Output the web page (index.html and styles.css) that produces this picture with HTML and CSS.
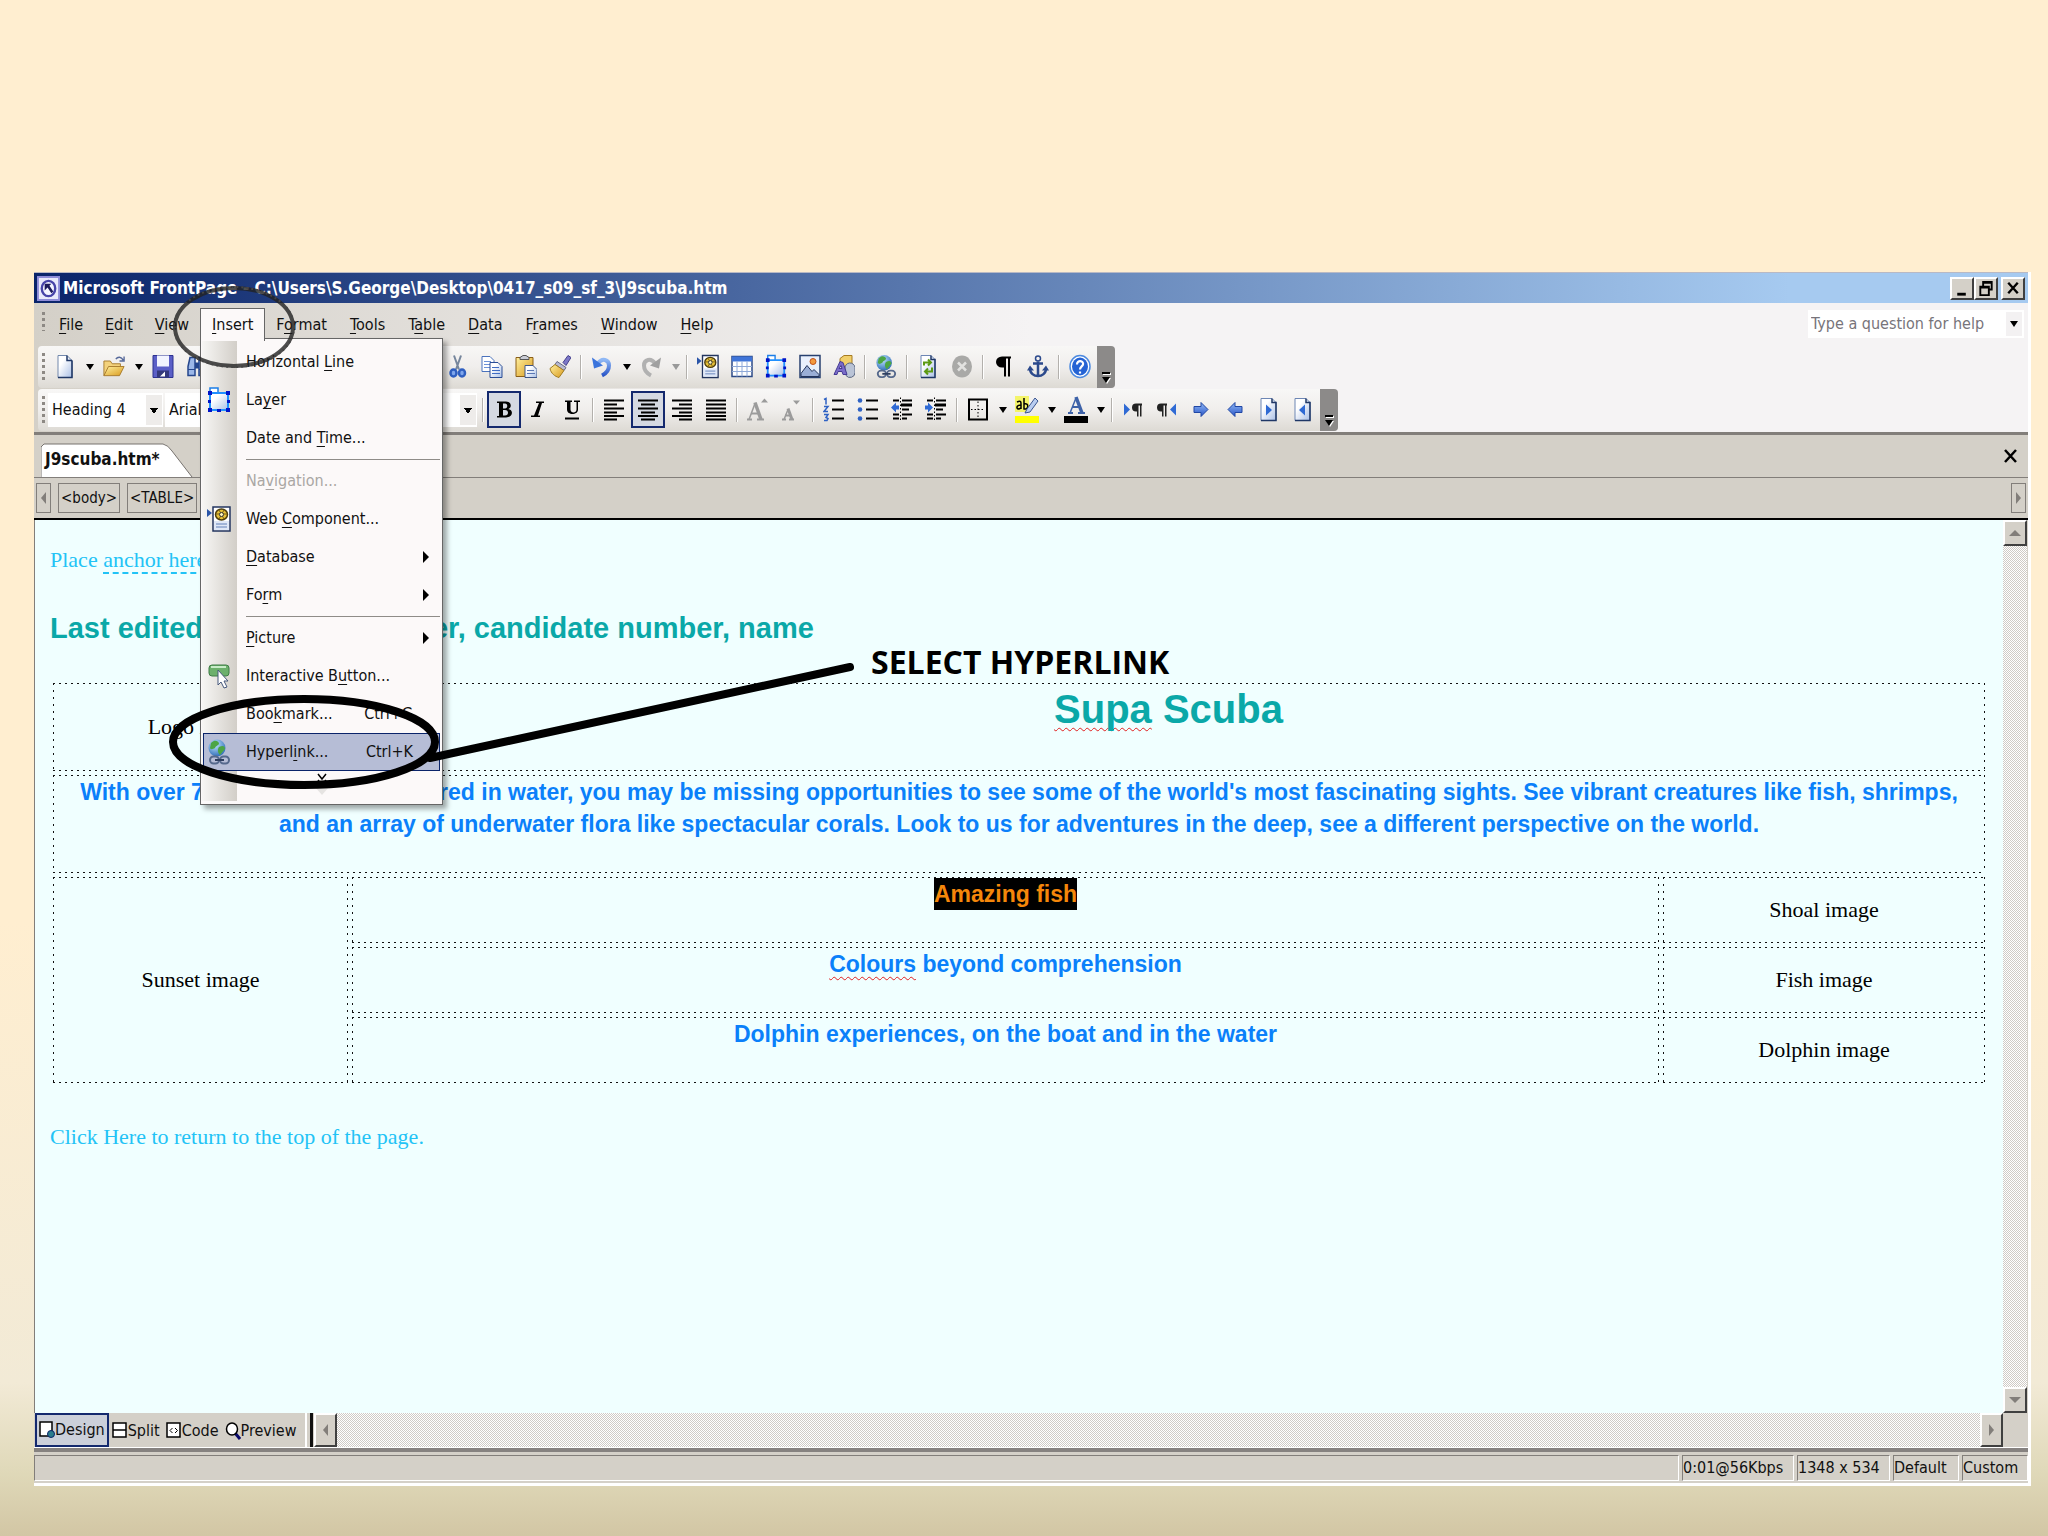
FILE: index.html
```
<!DOCTYPE html>
<html lang="en">
  <head>
    <meta charset="UTF-8" />
    <title>Microsoft FrontPage</title>
    <link rel="stylesheet" href="styles.css">
  </head>
  <body>
    <!-- icon set -->
    <svg class="defs" aria-hidden="true">
      <defs>
        <linearGradient id="g-blue" x1="0" y1="0" x2="0" y2="1"><stop offset="0" stop-color="#8fb8f5" /><stop offset="1" stop-color="#2a56c8" /></linearGradient>
        <linearGradient id="g-page" x1="0" y1="0" x2="1" y2="1"><stop offset="0.3" stop-color="#fff" /><stop offset="1" stop-color="#a9bfe6" /></linearGradient>
        <linearGradient id="g-gold" x1="0" y1="0" x2="1" y2="1"><stop offset="0" stop-color="#fff0a0" /><stop offset="1" stop-color="#d99a1c" /></linearGradient>
        <radialGradient id="g-globe" cx="0.4" cy="0.3" r="0.8"><stop offset="0" stop-color="#bfe6ff" /><stop offset="1" stop-color="#1f5fb0" /></radialGradient>
      </defs>
      <symbol id="i-new" viewBox="0 0 22 24"><path d="M4 1h9l5 5v17H4z" fill="url(#g-page)" stroke="#7288ac" /><path d="M13 1v5h5M18 6v17H4" fill="none" stroke="#1f3766" stroke-width="1.5" /></symbol>
      <symbol id="i-open" viewBox="0 0 24 24"><path d="M1 22V6h7l2 3h9v4" fill="#f3d27c" stroke="#a5782b" /><path d="M1 22l5-10h17l-5 10z" fill="url(#g-gold)" stroke="#a5782b" /><path d="M14 4c2-3 6-3 8 1m1-4v5h-5" fill="none" stroke="#56699a" stroke-width="1.5" /></symbol>
      <symbol id="i-save" viewBox="0 0 22 24"><path d="M1 1h20v22H1z" fill="#5b5fc7" stroke="#2d3290" /><path d="M5 1h12v11H5z" fill="#f2f4ff" /><path d="M5 16h12v7H5z" fill="#34387c" /><path d="M8 22l5-5v5z" fill="#fff" /></symbol>
      <symbol id="i-find" viewBox="0 0 22 24"><path d="M2 12l2-9h5v18H2zM20 12l-2-9h-5v18h7z" fill="#9bb7e8" stroke="#25468c" stroke-width="1.5" /><path d="M9 8h4v6H9z" fill="#25468c" /><path d="M2 15h7M13 15h7" stroke="#25468c" /></symbol>
      <symbol id="i-cut" viewBox="0 0 22 24"><path d="M7 1l5 14M14 1L9 15" stroke="#76869c" stroke-width="2" fill="none" /><ellipse cx="6.500" cy="18.500" rx="3" ry="3.500" fill="#7fa6ec" stroke="#2f5fc0" stroke-width="2.5" /><ellipse cx="15" cy="18.500" rx="3" ry="3.500" fill="#7fa6ec" stroke="#2f5fc0" stroke-width="2.5" /></symbol>
      <symbol id="i-copy" viewBox="0 0 22 24"><path d="M1 2h8l4 4v11H1z" fill="#fff" stroke="#4a72bc" /><path d="M3 7h7M3 10h7M3 13h7" stroke="#6d92d8" /><path d="M9 8h8l4 4v11H9z" fill="url(#g-page)" stroke="#2a4d96" /><path d="M11 13h7M11 16h8M11 19h8" stroke="#3f6cc4" /></symbol>
      <symbol id="i-paste" viewBox="0 0 22 24"><path d="M1 3h17v19H1z" fill="url(#g-gold)" stroke="#8b5f17" /><path d="M5 5V3l3-2h3l3 2v2z" fill="#c9ccd6" stroke="#555" /><path d="M10 11h8l4 4v8H10z" fill="url(#g-page)" stroke="#3c5489" /><path d="M12 16h7M12 19h8" stroke="#5a77b4" /></symbol>
      <symbol id="i-brush" viewBox="0 0 22 24"><path d="M14 8l5-7 3 2-5 8z" fill="#7d78c8" stroke="#45408c" /><path d="M8 7l9 6-2 3-9-6z" fill="#b8bad0" stroke="#666a8c" /><path d="M6 10l9 6-5 7c-4-1-8-4-9-9z" fill="url(#g-gold)" stroke="#a07c23" /></symbol>
      <symbol id="i-undo" viewBox="0 0 22 24"><path d="M7 9c4-6 11-4 11 2 0 4-3 8-7 10" fill="none" stroke="url(#g-blue)" stroke-width="4" /><path d="M1 3l2 11 9-3z" fill="#3b74dc" /></symbol>
      <symbol id="i-redo" viewBox="0 0 22 24"><path d="M15 9C11 3 4 5 4 11c0 4 3 8 7 10" fill="none" stroke="#b1b1b1" stroke-width="4" /><path d="M21 3l-2 11-9-3z" fill="#a0a0a0" /></symbol>
      <symbol id="i-web" viewBox="0 0 24 26"><path d="M0 3l5 4-5 4z" fill="#2a55a8" /><path d="M6 1h17v24H6z" fill="#fff" stroke="#23355f" stroke-width="1.5" /><path d="M7 15h15v9H7z" fill="#dfe7f7" /><path d="M9 18h11M9 21h11" stroke="#6380b8" /><ellipse cx="14.500" cy="8.500" rx="6" ry="5.500" fill="#e6c13a" stroke="#4d3d0b" stroke-width="1.500" /><path d="M9 8h11M12 4l5 9M17 4l-5 9" stroke="#7a5f10" /><circle cx="14.500" cy="8.500" r="2" fill="#fff5b8" stroke="#333" /></symbol>
      <symbol id="i-table" viewBox="0 0 22 24"><path d="M1 2h20v20H1z" fill="#fff" stroke="#2c4a86" stroke-width="1.5" /><path d="M1 2h20v5H1z" fill="#3f74d8" /><path d="M6 7v15M11 7v15M16 7v15M1 12h20M1 17h20" stroke="#8fa9d8" /></symbol>
      <symbol id="i-layer" viewBox="0 0 24 26"><path d="M3 6V1h8v5" fill="#fff" stroke="#1b7ee8" stroke-width="1.5" /><path d="M3 6h18v17H3z" fill="url(#g-page)" stroke="#2090ff" stroke-width="2" /><path d="M1 4h4v4H1zM19 4h4v4h-4zM1 21h4v4H1zM19 21h4v4h-4zM1 13h3v3H1zM20 13h3v3h-3zM10 22h4v3h-4z" fill="#0014c8" /></symbol>
      <symbol id="i-picture" viewBox="0 0 22 24"><path d="M1 1h20v22H1z" fill="#e9f0fc" stroke="#28406f" stroke-width="1.5" /><circle cx="14" cy="7" r="3" fill="#f39a3e" stroke="#c2541c" /><path d="M2 19l6-8 5 6 2-2 5 5v2H2z" fill="#9aaed6" stroke="#24355c" /></symbol>
      <symbol id="i-shapes" viewBox="0 0 22 24"><path d="M7 4l4-3h8v8l-3 3H7z" fill="#f1cf6a" stroke="#a67b22" /><path d="M12 14a5 5 0 0 1 10-1v5a5 5 0 0 1-9 3z" fill="#b9c3d6" stroke="#5b6780" /><path d="M1 20L7 7l3 1 4 12h-4l-1-3H5l-1 3zM6 14h3L8 11z" fill="#7a6cc9" stroke="#453a94" fill-rule="evenodd" /></symbol>
      <symbol id="i-link" viewBox="0 0 24 26"><circle cx="10" cy="9" r="8.500" fill="url(#g-globe)" /><path d="M4 4c4-4 7-2 8 0 0 3-3 2-4 5-2 1-4 2-5 0zM12 8c4-2 6-1 6 2l-5 6c-2-2-3-5-1-8z" fill="#4ca545" /><rect x="3" y="17.500" width="9" height="7" rx="3.500" fill="none" stroke="#56698c" stroke-width="2" /><rect x="13" y="17.500" width="9" height="7" rx="3.500" fill="none" stroke="#56698c" stroke-width="2" /><path d="M8 21h9" stroke="#2f3f60" stroke-width="2" /></symbol>
      <symbol id="i-refresh" viewBox="0 0 22 24"><path d="M4 1h10l4 4v18H4z" fill="url(#g-page)" stroke="#6d86b4" /><path d="M14 1v4h4v18H4" fill="none" stroke="#1f3766" stroke-width="1.500" /><path d="M7 11V8h6M11 5l3 3-3 3M15 13v4H9M11 14l-3 3 3 3" fill="none" stroke="#5c9a14" stroke-width="2" /></symbol>
      <symbol id="i-stop" viewBox="0 0 22 24"><ellipse cx="11" cy="12" rx="10" ry="11" fill="#a9a9a7" /><path d="M7 8l8 8M15 8l-8 8" stroke="#e2e2e0" stroke-width="2.500" /></symbol>
      <symbol id="i-para" viewBox="0 0 22 24"><path d="M18 2H9a6 5.500 0 0 0 0 11h2v9h2V4h2v18h2V4h1z" fill="#000" /></symbol>
      <symbol id="i-anchor" viewBox="0 0 22 24"><circle cx="11" cy="4" r="2.500" fill="none" stroke="#2c4a8c" stroke-width="1.500" /><path d="M11 7v14M6 9h10M3 14c0 10 16 10 16 0" fill="none" stroke="#2c4a8c" stroke-width="2.500" /><path d="M0 16l3-5 4 5zM22 16l-3-5-4 5z" fill="#2c4a8c" /></symbol>
      <symbol id="i-help" viewBox="0 0 22 24"><ellipse cx="11" cy="12" rx="10" ry="11" fill="#fff" stroke="#4d8ae0" stroke-width="1.500" /><ellipse cx="11" cy="12" rx="8" ry="9" fill="#2563d4" /><path d="M8 10c0-5 7-4 6 0-.5 2-3 2-3 5M11 17v2" fill="none" stroke="#fff" stroke-width="2.200" /></symbol>
      <symbol id="i-bold" viewBox="0 0 22 24"><path d="M4 4h9c6 0 6 7 2 7.500 6 .5 5 8.500-2 8.500H4v-1.500h2v-13H4zM10 6v5h2c3 0 3-5 0-5zm0 6.500V18h2c4 0 4-5.500 0-5.500z" fill="#000" fill-rule="evenodd" /></symbol>
      <symbol id="i-italic" viewBox="0 0 22 24"><path d="M9 4h8v1.500h-2L11 18h2v1.500H4V18h3l5-12.500H9z" fill="#000" /></symbol>
      <symbol id="i-under" viewBox="0 0 22 24"><path d="M4 3h7v1.500H9.500V12c0 4 6 4 6 0V4.500H13V3h6v1.500h-2V12c0 6-11 6-11 0V4.500H4zM4 20h14v2H4z" fill="#000" /></symbol>
      <symbol id="i-left" viewBox="0 0 22 24"><path d="M1 3h20M1 7h13M1 11h20M1 15h13M1 18.500h20M1 22h13" stroke="#000" stroke-width="2" /></symbol>
      <symbol id="i-center" viewBox="0 0 22 24"><path d="M1 3h20M4 7h14M1 11h20M4 15h14M1 18.500h20M4 22h14" stroke="#000" stroke-width="2" /></symbol>
      <symbol id="i-right" viewBox="0 0 22 24"><path d="M1 3h20M8 7h13M1 11h20M8 15h13M1 18.500h20M8 22h13" stroke="#000" stroke-width="2" /></symbol>
      <symbol id="i-just" viewBox="0 0 22 24"><path d="M1 3h20M1 7h20M1 11h20M1 15h20M1 18.500h20M1 22h20" stroke="#000" stroke-width="2" /></symbol>
      <symbol id="i-grow" viewBox="0 0 22 24"><path d="M2 22L8 6" fill="none" stroke="#9b9b9b" stroke-width="1.500" /><path d="M8 5l6 17" fill="none" stroke="#9b9b9b" stroke-width="3.500" /><path d="M4 16h8M0 22h5M10 22h7" fill="none" stroke="#9b9b9b" stroke-width="2" /><path d="M14 5l3.500-4L21 5z" fill="#9b9b9b" /></symbol>
      <symbol id="i-shrink" viewBox="0 0 22 24"><path d="M3 22L7 12" fill="none" stroke="#9b9b9b" stroke-width="1.500" /><path d="M7 11l4 11" fill="none" stroke="#9b9b9b" stroke-width="3" /><path d="M4 18h6M1 22h4M8 22h5" fill="none" stroke="#9b9b9b" stroke-width="2" /><path d="M12 3l3.500 4L19 3z" fill="#9b9b9b" /></symbol>
      <symbol id="i-num" viewBox="0 0 22 24"><path d="M9 3h12M9 12h12M9 21h12" stroke="#000" stroke-width="2" /><path d="M1 2l2-1v6M1 9h4L1 14h4M1 17h4l-2 3 2 1-1 2H1" fill="none" stroke="#2f62c4" stroke-width="1.500" /></symbol>
      <symbol id="i-bul" viewBox="0 0 22 24"><path d="M9 3h12M9 12h12M9 21h12" stroke="#000" stroke-width="2" /><circle cx="3" cy="3" r="2.300" fill="#2f62c4" /><circle cx="3" cy="12" r="2.300" fill="#2f62c4" /><circle cx="3" cy="21" r="2.300" fill="#2f62c4" /></symbol>
      <symbol id="i-outd" viewBox="0 0 22 24"><path d="M2 3h6M11 3h10M11 12h7M2 17h6M11 17h10M2 21h6M11 21h5" stroke="#000" stroke-width="2" /><path d="M10 7.500h11" stroke="#000" stroke-width="3" /><path d="M9.500 0v24" stroke="#000" stroke-dasharray="1.500 2" /><path d="M0 10l5-5v3h3v4H5v3z" fill="#2f6ad4" /></symbol>
      <symbol id="i-ind" viewBox="0 0 22 24"><path d="M2 3h6M11 3h10M11 12h7M2 17h6M11 17h10M2 21h6M11 21h5" stroke="#000" stroke-width="2" /><path d="M10 7.500h11" stroke="#000" stroke-width="3" /><path d="M9.500 0v24" stroke="#000" stroke-dasharray="1.500 2" /><path d="M8 10L3 5v3H0v4h3v3z" fill="#2f6ad4" /></symbol>
      <symbol id="i-border" viewBox="0 0 22 24"><path d="M2 2h18v20H2z" fill="none" stroke="#000" stroke-width="2" /><path d="M11 4v16M4 12h14" stroke="#000" stroke-dasharray="1.500 2" /></symbol>
      <symbol id="i-mark" viewBox="0 0 24 28"><path d="M0 0h14v16H0z" fill="#f4f46a" /><path d="M2 6c4-2 4 0 4 2v5M6 9c-5 0-5 4-2 4l2-1M9 2v11c5 1 5-7 0-5" fill="none" stroke="#000" stroke-width="1.500" /><path d="M12 13L20 2l3 3-8 11-5 1z" fill="#b9cdf0" stroke="#3a5590" /><path d="M0 20h24v7H0z" fill="#ff0" /></symbol>
      <symbol id="i-color" viewBox="0 0 24 28"><path d="M6 17l6-15" fill="none" stroke="#3d62a8" stroke-width="1.500" /><path d="M12 1l6 16" fill="none" stroke="#3d62a8" stroke-width="3.500" /><path d="M8 11h8M4 17h5M14 17h7" fill="none" stroke="#3d62a8" stroke-width="2" /><path d="M0 20h24v7H0z" fill="#000" /></symbol>
      <symbol id="i-ltr" viewBox="0 0 22 24"><path d="M2 6l6 6-6 6z" fill="#2f6ad4" /><path d="M20 6h-6a4 4 0 0 0 0 8h1v5h1.500V8H18v11h1.500V8h.5z" fill="#222" /></symbol>
      <symbol id="i-rtl" viewBox="0 0 22 24"><path d="M20 6l-6 6 6 6z" fill="#2f6ad4" /><path d="M11 6H5a4 4 0 0 0 0 8h1v5h1.500V8H9v11h1.500V8h.5z" fill="#222" /></symbol>
      <symbol id="i-next" viewBox="0 0 22 24"><path d="M4 9h7V5l7 7-7 7v-4H4z" fill="url(#g-blue)" stroke="#2147a4" /></symbol>
      <symbol id="i-prev" viewBox="0 0 22 24"><path d="M18 9h-7V5l-7 7 7 7v-4h7z" fill="url(#g-blue)" stroke="#2147a4" /></symbol>
      <symbol id="i-pnext" viewBox="0 0 22 24"><path d="M3 1h11l4 4v18H3z" fill="url(#g-page)" stroke="#6d86b4" /><path d="M14 1v4h4v18H3" fill="none" stroke="#1f3766" stroke-width="1.500" /><path d="M8 7l6 5.500L8 18z" fill="#2f6ad4" /></symbol>
      <symbol id="i-pprev" viewBox="0 0 22 24"><path d="M3 1h11l4 4v18H3z" fill="url(#g-page)" stroke="#6d86b4" /><path d="M14 1v4h4v18H3" fill="none" stroke="#1f3766" stroke-width="1.500" /><path d="M13 7l-6 5.500 6 5.500z" fill="#2f6ad4" /></symbol>
      <symbol id="i-button" viewBox="0 0 24 26"><rect x="2" y="2" width="20" height="11" rx="3" fill="#6cb06c" stroke="#3f7d46" /><path d="M4 4h15" stroke="#c8ecc8" stroke-width="2" /><path d="M11 7v15l3-3 3 6 3-1-3-6h4z" fill="#fff" stroke="#46587c" /></symbol>
    </svg>

    <div class="window">
      <header class="titlebar">
        <svg class="app-icon" viewBox="0 0 24 26"><path d="M1 1h22v24H1z" fill="#e9e9fb" stroke="#8e8cd8" stroke-width="2" /><ellipse cx="12" cy="13" rx="7" ry="8" fill="#f4f4ff" stroke="#4743a8" stroke-width="2.500" /><path d="M8 8h7l-2 2 4 6-2 2-4-6-3 3z" fill="#1d1a5c" /></svg>
        <span class="title">Microsoft FrontPage - C:\Users\S.George\Desktop\0417_s09_sf_3\J9scuba.htm</span>
        <button class="win-btn" aria-label="Minimize"><svg viewBox="0 0 20 20"><path d="M5 16h9" stroke="#000" stroke-width="3" /></svg></button>
        <button class="win-btn" aria-label="Restore"><svg viewBox="0 0 20 20"><path d="M7 7V3h9v8h-3M7 4h9M4 8h9v9H4zM4 9h9" fill="none" stroke="#000" stroke-width="2" /></svg></button>
        <button class="win-btn win-close" aria-label="Close"><svg viewBox="0 0 20 20"><path d="M5 4l10 11M15 4L5 15" stroke="#000" stroke-width="2.500" /></svg></button>
      </header>

      <div class="chrome">
        <nav class="menubar">
          <span class="grip"></span>
          <button><u>F</u>ile</button>
          <button><u>E</u>dit</button>
          <button><u>V</u>iew</button>
          <div class="menu-wrap">
            <button class="open"><u>I</u>nsert</button>
            <div class="menu">
              <button><span>Horizontal <u>L</u>ine</span></button>
              <button><svg class="mi"><use href="#i-layer" /></svg><span>La<u>y</u>er</span></button>
              <button><span>Date and <u>T</u>ime...</span></button>
              <hr>
              <button disabled><span>Na<u>v</u>igation...</span></button>
              <button><svg class="mi"><use href="#i-web" /></svg><span>Web <u>C</u>omponent...</span></button>
              <button class="sub"><span><u>D</u>atabase</span></button>
              <button class="sub"><span>Fo<u>r</u>m</span></button>
              <hr>
              <button class="sub"><span><u>P</u>icture</span></button>
              <button><svg class="mi"><use href="#i-button" /></svg><span>Interactive B<u>u</u>tton...</span></button>
              <button><span>Boo<u>k</u>mark...</span><kbd>Ctrl+G</kbd></button>
              <button class="selected"><svg class="mi"><use href="#i-link" /></svg><span>Hyperl<u>i</u>nk...</span><kbd>Ctrl+K</kbd></button>
              <div class="more"><svg viewBox="0 0 20 24"><path d="M10 24L3 16h14z" fill="#e6e4e2" /><path d="M6 3l4 5 4-5M6 9l4 5 4-5" fill="none" stroke="#000" stroke-width="1.500" /></svg></div>
            </div>
          </div>
          <button>F<u>o</u>rmat</button>
          <button><u>T</u>ools</button>
          <button>T<u>a</u>ble</button>
          <button><u>D</u>ata</button>
          <button>F<u>r</u>ames</button>
          <button><u>W</u>indow</button>
          <button><u>H</u>elp</button>
          <div class="ask">
            <input type="text" placeholder="Type a question for help" aria-label="Type a question for help">
            <button aria-label="Recent questions"><i class="arr"></i></button>
          </div>
        </nav>

        <div class="toolbar">
          <span class="grip"></span>
          <button class="tb" aria-label="New"><svg><use href="#i-new" /></svg></button><button class="drop" aria-label="New options"><i class="arr"></i></button>
          <button class="tb" aria-label="Open"><svg><use href="#i-open" /></svg></button><button class="drop" aria-label="Open options"><i class="arr"></i></button>
          <button class="tb" aria-label="Save"><svg><use href="#i-save" /></svg></button>
          <button class="tb" aria-label="Find"><svg><use href="#i-find" /></svg></button>
          <span class="spacer"></span>
          <button class="tb" aria-label="Cut"><svg><use href="#i-cut" /></svg></button>
          <button class="tb" aria-label="Copy"><svg><use href="#i-copy" /></svg></button>
          <button class="tb" aria-label="Paste"><svg><use href="#i-paste" /></svg></button>
          <button class="tb" aria-label="Format painter"><svg><use href="#i-brush" /></svg></button>
          <span class="sep"></span>
          <button class="tb" aria-label="Undo"><svg><use href="#i-undo" /></svg></button><button class="drop" aria-label="Undo list"><i class="arr"></i></button>
          <button class="tb" aria-label="Redo"><svg><use href="#i-redo" /></svg></button><button class="drop" aria-label="Redo list"><i class="arr off"></i></button>
          <span class="sep"></span>
          <button class="tb" aria-label="Web component"><svg><use href="#i-web" /></svg></button>
          <button class="tb" aria-label="Insert table"><svg><use href="#i-table" /></svg></button>
          <button class="tb" aria-label="Insert layer"><svg><use href="#i-layer" /></svg></button>
          <button class="tb" aria-label="Insert picture"><svg><use href="#i-picture" /></svg></button>
          <button class="tb" aria-label="Drawing"><svg><use href="#i-shapes" /></svg></button>
          <span class="sep"></span>
          <button class="tb" aria-label="Insert hyperlink"><svg><use href="#i-link" /></svg></button>
          <span class="sep"></span>
          <button class="tb" aria-label="Refresh"><svg><use href="#i-refresh" /></svg></button>
          <button class="tb" aria-label="Stop"><svg><use href="#i-stop" /></svg></button>
          <span class="sep"></span>
          <button class="tb" aria-label="Show all"><svg><use href="#i-para" /></svg></button>
          <button class="tb" aria-label="Show layer anchors"><svg><use href="#i-anchor" /></svg></button>
          <span class="sep"></span>
          <button class="tb" aria-label="Help"><svg><use href="#i-help" /></svg></button>
          <button class="tb-end" aria-label="Toolbar options"><i class="arr"></i></button>
        </div>

        <div class="toolbar">
          <span class="grip"></span>
          <span class="combo style"><select aria-label="Style"><option>Heading 4</option></select></span>
          <span class="combo font"><select aria-label="Font"><option>Arial</option></select></span>
          <span class="combo size"><select aria-label="Font size"><option></option></select></span>
          <span class="sep"></span>
          <button class="tb on" aria-label="Bold"><svg><use href="#i-bold" /></svg></button>
          <button class="tb" aria-label="Italic"><svg><use href="#i-italic" /></svg></button>
          <button class="tb" aria-label="Underline"><svg><use href="#i-under" /></svg></button>
          <span class="sep"></span>
          <button class="tb" aria-label="Align left"><svg><use href="#i-left" /></svg></button>
          <button class="tb on" aria-label="Center"><svg><use href="#i-center" /></svg></button>
          <button class="tb" aria-label="Align right"><svg><use href="#i-right" /></svg></button>
          <button class="tb" aria-label="Justify"><svg><use href="#i-just" /></svg></button>
          <span class="sep"></span>
          <button class="tb" aria-label="Increase font size"><svg><use href="#i-grow" /></svg></button>
          <button class="tb" aria-label="Decrease font size"><svg><use href="#i-shrink" /></svg></button>
          <span class="sep"></span>
          <button class="tb" aria-label="Numbering"><svg><use href="#i-num" /></svg></button>
          <button class="tb" aria-label="Bullets"><svg><use href="#i-bul" /></svg></button>
          <button class="tb" aria-label="Decrease indent"><svg><use href="#i-outd" /></svg></button>
          <button class="tb" aria-label="Increase indent"><svg><use href="#i-ind" /></svg></button>
          <span class="sep"></span>
          <button class="tb" aria-label="Borders"><svg><use href="#i-border" /></svg></button><button class="drop" aria-label="Border options"><i class="arr"></i></button>
          <button class="tb" aria-label="Highlight"><svg class="tall"><use href="#i-mark" /></svg></button><button class="drop" aria-label="Highlight colours"><i class="arr"></i></button>
          <button class="tb" aria-label="Font color"><svg class="tall"><use href="#i-color" /></svg></button><button class="drop" aria-label="Font colours"><i class="arr"></i></button>
          <span class="sep"></span>
          <button class="tb" aria-label="Left to right"><svg><use href="#i-ltr" /></svg></button>
          <button class="tb" aria-label="Right to left"><svg><use href="#i-rtl" /></svg></button>
          <button class="tb" aria-label="Next"><svg><use href="#i-next" /></svg></button>
          <button class="tb" aria-label="Previous"><svg><use href="#i-prev" /></svg></button>
          <button class="tb" aria-label="Next page"><svg><use href="#i-pnext" /></svg></button>
          <button class="tb" aria-label="Previous page"><svg><use href="#i-pprev" /></svg></button>
          <button class="tb-end" aria-label="Toolbar options"><i class="arr"></i></button>
        </div>
      </div>

      <div class="tabs">
        <button class="tab"><svg viewBox="0 0 152 34" preserveAspectRatio="none"><path d="M0 34V4l3-3h119q5 1 9 7l20 26" fill="#fff" stroke="#77736f" /></svg><span>J9scuba.htm*</span></button>
        <button class="tab-close" aria-label="Close page"><svg viewBox="0 0 14 14"><path d="M1 1l11 12M12 1L1 13" stroke="#000" stroke-width="2.500" /></svg></button>
      </div>
      <div class="tags">
        <button class="nudge" aria-label="Scroll tags left"><i class="tri-l"></i></button>
        <button class="tag">&lt;body&gt;</button>
        <button class="tag">&lt;TABLE&gt;</button>
        <button class="nudge last" aria-label="Scroll tags right"><i class="tri-r"></i></button>
      </div>

      <div class="work">
        <main class="doc">
          <p>Place <span class="mark">anchor here</span></p>
          <h3>Last edited by Centre number, candidate number, name</h3>
          <table>
            <colgroup><col class="c1"><col><col class="c3"></colgroup>
            <tr class="r1">
              <td>Logo image</td>
              <td class="top" colspan="2"><h1><span class="typo">Supa</span> Scuba</h1></td>
            </tr>
            <tr class="r2">
              <td class="top" colspan="3"><h4>With over 70% of the planet covered in water, you may be missing opportunities to see some of the world's most fascinating sights. See vibrant creatures like fish, shrimps, and an array of underwater flora like spectacular corals. Look to us for adventures in the deep, see a different perspective on the world.</h4></td>
            </tr>
            <tr class="r3">
              <td rowspan="3">Sunset image</td>
              <td class="top"><h4><span class="picked">Amazing fish</span></h4></td>
              <td>Shoal image</td>
            </tr>
            <tr class="r3">
              <td class="top"><h4><span class="typo">Colours</span> beyond comprehension</h4></td>
              <td>Fish image</td>
            </tr>
            <tr class="r3">
              <td class="top"><h4>Dolphin experiences, on the boat and in the water</h4></td>
              <td>Dolphin image</td>
            </tr>
          </table>
          <p>Click Here to return to the top of the page.</p>
        </main>
        <div class="vscroll">
          <button aria-label="Scroll up"><i class="tri-u"></i></button>
          <button aria-label="Scroll down"><i class="tri-d"></i></button>
        </div>
      </div>

      <div class="views">
        <button class="view on"><svg viewBox="0 0 16 18"><path d="M1 1h12v14H1z" fill="#fff" stroke="#000" stroke-width="1.500" /><circle cx="12" cy="13" r="3.500" fill="#2c7c8c" stroke="#0a246a" /></svg>Design</button>
        <button class="view"><svg viewBox="0 0 16 18"><path d="M1 1h13v14H1zM1 8h13" fill="#fff" stroke="#000" stroke-width="1.500" /></svg>Split</button>
        <button class="view"><svg viewBox="0 0 16 18"><path d="M1 1h13v14H1z" fill="#fff" stroke="#000" stroke-width="1.500" /><path d="M6.500 6L4 8.500 6.500 11M9 6l2.500 2.500L9 11" fill="none" stroke="#000" /></svg>Code</button>
        <button class="view"><svg viewBox="0 0 16 18"><path d="M10 11l5 6" stroke="#0a0a6a" stroke-width="3" /><ellipse cx="7" cy="7" rx="5.500" ry="6" fill="#fff" stroke="#000" stroke-width="1.500" /></svg>Preview</button>
        <span class="split"></span>
        <div class="hscroll">
          <button aria-label="Scroll left"><i class="tri-l"></i></button>
          <button aria-label="Scroll right"><i class="tri-r"></i></button>
        </div>
      </div>

      <footer class="status">
        <span class="pane wide"></span>
        <span class="pane speed">0:01@56Kbps</span>
        <span class="pane dims">1348 x 534</span>
        <span class="pane mode">Default</span>
        <span class="pane mode">Custom</span>
      </footer>

      <!-- hand drawn notes, origin at the window's corner -->
      <svg class="notes" viewBox="0 0 1200 600" aria-hidden="true">
        <ellipse cx="200" cy="55" rx="59" ry="39" fill="none" stroke="#222" stroke-opacity="0.8" stroke-width="4" />
        <ellipse cx="200" cy="55" rx="60" ry="40" fill="none" stroke="#444" stroke-width="2" stroke-dasharray="2 3" />
        <ellipse cx="270" cy="470" rx="131" ry="43" fill="none" stroke="#000" stroke-width="8" />
        <path d="M396 486L816 395" stroke="#000" stroke-width="8" stroke-linecap="round" />
      </svg>
      <div class="callout">SELECT HYPERLINK</div>
    </div>
  </body>
</html>
```
FILE: styles.css
```
* {
  box-sizing: border-box;
}
body {
  margin: 0;
  min-height: 100vh;
  padding: 272px 17px 50px 34px;
  display: flex;
  flex-direction: column;
  background: linear-gradient(#ffeed0 60%, #f2ead6 90%, #dfd8b8 96%, #d2c6a4);
  font: 16px/22px "DejaVu Sans Condensed", "DejaVu Sans", sans-serif;
  color: #111;
}
button,
input,
select {
  font: inherit;
  color: inherit;
  border: 0;
  padding: 0;
  margin: 0;
  background: none;
}
svg {
  display: block;
}
.defs {
  position: absolute;
  width: 0;
  height: 0;
}

.window {
  position: relative;
  flex: 1;
  display: flex;
  flex-direction: column;
  background: #d4d0c8;
  border: solid #fff;
  border-width: 0 3px 3px 0;
}

/* title bar */
.titlebar {
  height: 31px;
  padding: 0 3px;
  display: flex;
  align-items: center;
  border-top: 1px solid #b9b9c4;
  background: linear-gradient(90deg, #0a246a, #a6caf0 88%);
  color: #fff;
}
.app-icon {
  width: 23px;
  height: 25px;
}
.title {
  flex: 1;
  margin-left: 3px;
  font-size: 17px;
  font-weight: bold;
}
.win-btn {
  width: 24px;
  height: 23px;
  background: #d4d0c8;
  border: 2px solid;
  border-color: #fff #404040 #404040 #fff;
}
.win-btn svg {
  width: 20px;
  height: 19px;
}
.win-close {
  margin-left: 3px;
}

/* menus and toolbars */
.chrome {
  background: linear-gradient(90deg, #d4d0c8, #f5f3f4 50%);
  border-bottom: 3px solid #827e7a;
}
.menubar {
  height: 43px;
  padding: 5px 4px 0;
  display: flex;
}
.menubar > button,
.menu-wrap > button {
  height: 33px;
  padding: 0 11px;
}
.menu-wrap ~ button {
  padding-right: 12px;
}
.menubar u,
.menu u {
  text-underline-offset: 3px;
}
.grip {
  flex: none;
  width: 3px;
  margin: 7px 5px 7px 4px;
  background: repeating-linear-gradient(#8d8984 0 3px, transparent 3px 6px);
}
.menubar .grip {
  margin: 4px 3px 15px 4px;
}
.menu-wrap {
  position: relative;
}
.menu-wrap > .open {
  position: relative;
  z-index: 6;
  background: #fcf9f9;
  border: solid #666;
  border-width: 1px 1px 0;
}
.menu {
  position: absolute;
  z-index: 5;
  top: 30px;
  left: 0;
  width: 243px;
  padding: 4px 2px 3px;
  border: 1px solid #666;
  background: linear-gradient(90deg, #f7f6f4, #d2cec8) 1px 2px / 35px 460px no-repeat #fcf9f9;
  box-shadow: 4px 4px 5px rgba(0, 0, 0, 0.35);
}
.menu button {
  position: relative;
  display: flex;
  align-items: center;
  width: 100%;
  height: 38px;
  padding: 0 26px 0 42px;
  border: 1px solid transparent;
  white-space: nowrap;
}
.menu button:disabled {
  color: #aaa7a4;
}
.menu .selected {
  background: #b6bdd6;
  border-color: #0a246a;
}
.menu kbd {
  margin-left: auto;
  font: inherit;
}
.menu hr {
  height: 1px;
  margin: 2px 0 2px 43px;
  border: 0;
  background: #8f8c88;
}
.mi {
  position: absolute;
  left: 3px;
  width: 24px;
  height: 26px;
}
.sub::after {
  content: "";
  margin-left: auto;
  margin-right: -16px;
  border: solid transparent;
  border-width: 6px 0 6px 6px;
  border-left-color: #000;
}
.more {
  height: 30px;
  display: flex;
  justify-content: center;
}
.more svg {
  width: 20px;
  height: 24px;
}
.ask {
  margin-left: auto;
  align-self: flex-start;
  display: flex;
  width: 216px;
  height: 28px;
  margin-top: 2px;
  background: #fff;
}
.ask input {
  width: 192px;
  padding-left: 3px;
}
.ask input::placeholder {
  color: #77747a;
  opacity: 1;
}
.ask button {
  width: 16px;
  margin: 2px 0 2px 6px;
  background: #f3f1f2;
}
.arr {
  display: block;
  width: 0;
  margin: auto;
  border: solid transparent;
  border-width: 6px 4px 0;
  border-top-color: #000;
}
.arr.off {
  border-top-color: #999;
}
.toolbar {
  display: flex;
  align-items: stretch;
  width: max-content;
  height: 42px;
  margin: 0 0 1px 4px;
  border-radius: 4px;
  background: linear-gradient(#f8f7f6, #f0eeec 50%, #dddad4);
}
.toolbar .grip {
  margin: 7px 3px 7px 4px;
}
.tb {
  width: 34px;
  height: 37px;
  margin-top: 2px;
  display: flex;
  align-items: center;
  justify-content: center;
}
.tb svg {
  width: 22px;
  height: 25px;
}
.tb svg.tall {
  width: 24px;
  height: 28px;
}
.tb.on {
  background: #d5d9e2;
  border: 2px solid #14296e;
}
.drop {
  width: 15px;
}
.sep {
  width: 2px;
  margin: 9px 3px;
  background: #b3b0ac;
  border-right: 1px solid #fff;
}
.spacer {
  width: 227px;
}
.tb-end {
  width: 18px;
  padding-top: 20px;
  border-radius: 0 4px 4px 0;
  background: #8c8a89;
}
.tb-end .arr {
  filter: drop-shadow(1px 1px 0 #fff);
}
.tb-end::before {
  content: "";
  display: block;
  width: 8px;
  height: 2px;
  margin: 0 auto 3px;
  background: #000;
  box-shadow: 1px 1px 0 #fff;
}
.combo {
  position: relative;
  height: 34px;
  margin: 4px 2px 0 0;
  background: #fff;
}
.combo select {
  appearance: none;
  width: 100%;
  height: 34px;
  padding-left: 4px;
}
.combo::after {
  content: "";
  position: absolute;
  top: 2px;
  right: 1px;
  width: 16px;
  height: 30px;
  pointer-events: none;
  background: conic-gradient(from -34deg at 50% 100%, #000 68deg, transparent 0) 4px 13px / 8px 6px no-repeat #eeecea;
}
.style {
  width: 115px;
}
.font {
  width: 191px;
}
.size {
  width: 119px;
}

/* page tabs and tag selector */
.tabs {
  display: flex;
  justify-content: space-between;
  align-items: flex-end;
  height: 43px;
  padding: 0 10px 0 7px;
  border-bottom: 1px solid #827e7a;
}
.tab {
  position: relative;
  width: 152px;
  height: 34px;
  padding: 0 0 2px 4px;
  font-size: 17px;
  font-weight: bold;
  text-align: left;
}
.tab svg {
  position: absolute;
  top: 0;
  left: 0;
  width: 152px;
  height: 34px;
}
.tab span {
  position: relative;
}
.tab-close {
  align-self: center;
}
.tab-close svg {
  width: 14px;
  height: 14px;
}
.tags {
  display: flex;
  gap: 7px;
  height: 42px;
  padding: 5px 2px;
  border-bottom: 2px solid #000;
}
.tag,
.nudge {
  height: 30px;
  border: 1px solid #827e7a;
}
.tag {
  padding: 0 2px;
  font-size: 15px;
}
.nudge {
  width: 15px;
}
.last {
  margin-left: auto;
}

/* arrows */
.tri-l,
.tri-r,
.tri-u,
.tri-d {
  display: block;
  width: 0;
  margin: auto;
  border: 6px solid transparent;
}
.tri-l {
  border-width: 6px 5px 6px 0;
  border-right-color: #827e7a;
}
.tri-r {
  border-width: 6px 0 6px 5px;
  border-left-color: #827e7a;
}
.tri-u {
  border-top: 0;
  border-bottom-color: #827e7a;
}
.tri-d {
  border-bottom: 0;
  border-top-color: #827e7a;
}

/* edited page */
.work {
  flex: 1;
  display: flex;
  border-left: 1px solid #827e7a;
}
.doc {
  flex: 1;
  padding: 25px 14px;
  background: #f0ffff;
  font: 22px/30px "Liberation Serif", "Times New Roman", serif;
  color: #000;
}
.doc p {
  margin: 0;
  padding-left: 1px;
  color: #22c3f6;
}
.mark {
  border-bottom: 2px dashed #22c3f6;
  display: inline-block;
  line-height: 24px;
}
.doc h1,
.doc h3,
.doc h4 {
  margin: 0;
  font-family: "Liberation Sans", Arial, sans-serif;
}
.doc h3 {
  margin: 36px 0 34px;
  padding-left: 1px;
  font-size: 29px;
  line-height: 34px;
  color: #0aa8a8;
}
.doc h1 {
  font-size: 40px;
  line-height: 50px;
  color: #0aa8a8;
}
.doc h4 {
  padding: 0 10px;
  font-size: 23px;
  line-height: 32px;
  color: #0a80fa;
}
.doc table {
  width: 100%;
  margin-bottom: 35px;
  table-layout: fixed;
  border-spacing: 4px;
}
.doc td {
  padding: 1px;
  text-align: center;
  background:
    repeating-linear-gradient(90deg, #111 0 2px, transparent 2px 6px) top / 100% 1px no-repeat,
    repeating-linear-gradient(90deg, #111 0 2px, transparent 2px 6px) bottom / 100% 1px no-repeat,
    repeating-linear-gradient(#111 0 2px, transparent 2px 7px) left / 1px 100% no-repeat,
    repeating-linear-gradient(#111 0 2px, transparent 2px 7px) right / 1px 100% no-repeat;
}
.doc .top {
  vertical-align: top;
}
.c1 {
  width: 295px;
}
.c3 {
  width: 322px;
}
.r1 {
  height: 88px;
}
.r2 {
  height: 98px;
}
.r3 {
  height: 66px;
}
.typo {
  text-decoration: underline wavy #e02020 1px;
  text-underline-offset: 4px;
  text-decoration-skip-ink: none;
}
.picked {
  display: inline-block;
  background: #000;
  color: #f5870a;
}

/* scroll bars */
.vscroll,
.hscroll {
  display: flex;
  justify-content: space-between;
  background: repeating-conic-gradient(#cfcbc6 0 25%, #fff 0 50%) 0 0 / 2px 2px;
}
.vscroll {
  flex-direction: column;
  width: 24px;
  margin-right: 1px;
}
.vscroll button,
.hscroll button {
  background: #d4d0c8;
  border: 2px solid;
  border-color: #fff #404040 #404040 #fff;
}
.vscroll button {
  height: 26px;
}
.hscroll {
  flex: 1;
  margin-right: 25px;
}
.hscroll button {
  width: 23px;
}

/* view switcher */
.views {
  display: flex;
  height: 35px;
  padding-left: 1px;
  border-bottom: 1px solid #fff;
}
.view {
  display: flex;
  align-items: center;
  padding: 2px 3px 0;
}
.view svg {
  width: 16px;
  height: 18px;
}
.view.on {
  padding: 0 2px;
  background: #ccd0da;
  border: 2px solid #14296e;
}
.split {
  width: 8px;
  margin: 0 1px 0 6px;
  border: solid #fff;
  border-width: 0 0 0 2px;
  border-right: 3px solid #111;
}

/* status bar */
.status {
  display: flex;
  gap: 3px;
  padding: 3px 0 2px;
  border-top: 4px solid #868280;
}
.pane {
  height: 26px;
  padding-top: 1px;
  border: 1px solid;
  border-color: #827e7a #fff #fff #827e7a;
  white-space: nowrap;
}
.wide {
  flex: 1;
}
.speed {
  width: 112px;
}
.dims {
  width: 93px;
}
.mode {
  width: 66px;
}

/* notes drawn over the window */
.notes {
  position: absolute;
  z-index: 10;
  top: 0;
  left: 0;
  width: 1200px;
  height: 600px;
  pointer-events: none;
}
.callout {
  position: absolute;
  z-index: 10;
  top: 370px;
  left: 837px;
  font: bold 32px/40px "Open Sans", Calibri, sans-serif;
  color: #000;
}
```
